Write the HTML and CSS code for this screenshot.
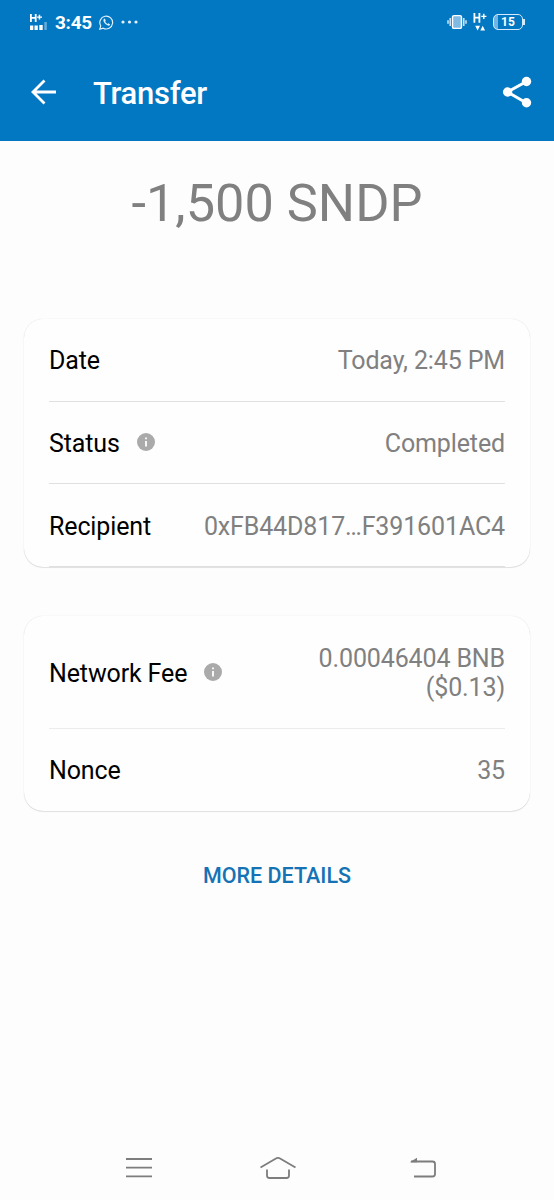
FILE: index.html
```html
<!DOCTYPE html>
<html lang="en">
<head>
<meta charset="utf-8">
<title>Transfer</title>
<link rel="stylesheet" href="styles.css">
</head>
<body>
<header class="top">
  <div class="status">
    <div class="status-left">
      <svg class="signal" width="19" height="18" viewBox="0 0 19 18" fill="#fff">
        <path d="M1 0h1.800v3h3V0h1.800v8H5.800V4.700h-3V8H1zM9.700.7h1.500v1.700h1.800v1.400h-1.800v1.700H9.700V3.800H8.100V2.400h1.600z"/>
        <path d="M1 11.500h3.300V16H1zM5.500 11.500h3.300V16H5.500zM10.300 11h3.400v5h-3.400z"/>
        <path d="M15.300 8h2.500v8h-2.500z" opacity=".4"/>
      </svg>
      <span class="clock">3:45</span>
      <svg class="chat" width="15" height="15" viewBox="0 0 15 15">
        <path d="M1.700 10.800A6.400 6.400 0 1 1 4.200 13.200L.8 14.200z" fill="none" stroke="#e3f1fb" stroke-width="1.200"/>
        <path d="M5 3.800q-1 1-.4 2.700 1.300 3 4.300 4.100 1.500.3 2.300-1.200l-1.700-1.200-1 .9Q6.900 8.200 6.100 6.600l.7-.8L6 3.800z" fill="#e3f1fb"/>
      </svg>
      <svg width="17" height="4" viewBox="0 0 17 4" fill="#e3f1fb"><circle cx="2" cy="2" r="1.600"/><circle cx="8.500" cy="2" r="1.600"/><circle cx="15" cy="2" r="1.600"/></svg>
    </div>
    <div class="status-right">
      <svg width="20" height="16" viewBox="0 0 20 16">
        <rect x="5.500" y="1.600" width="9" height="12.800" rx="1.500" fill="#7fbae5" stroke="#fff" stroke-width="1.400"/>
        <path d="M3.200 4v8M16.800 4v8M1 6.300v3.400M19 6.300v3.400" stroke="#d4e9f8" stroke-width="1.500"/>
      </svg>
      <svg class="net" width="14" height="19" viewBox="0 0 14 19" fill="#fff">
        <path d="M.5 0h1.800v3.800h3.200V0h1.800v9.800H5.500V5.500H2.300v4.300H.5zM10 .8h1.500v1.900h1.900v1.400h-1.900V6H10V4.100H8.200V2.700H10z"/>
        <path d="M2.200 12.800h4.800L4.600 17.600zM7.300 17.600h4.800l-2.400-4.800z"/>
      </svg>
      <div class="battery"><span class="level">15</span></div>
    </div>
  </div>
  <div class="bar">
    <svg class="back" width="26" height="26" viewBox="0 0 26 26" fill="none" stroke="#fff" stroke-width="2.800"><path d="M25 13H2.500M13.500 1.500L2 13l11.500 11.500"/></svg>
    <h1 class="title">Transfer</h1>
    <svg class="share" width="30" height="32" viewBox="0 0 30 32" fill="#fff"><path d="M24.500 5.500L5.500 16l19 11" fill="none" stroke="#fff" stroke-width="3"/><circle cx="24.500" cy="5.500" r="4.700"/><circle cx="5.600" cy="16" r="4.700"/><circle cx="24.500" cy="26.700" r="4.700"/></svg>
  </div>
</header>
<main class="content">
  <div class="amount">-1,500 SNDP</div>
  <section class="card">
    <div class="row line"><span class="label">Date</span><span class="value">Today, 2:45 PM</span></div>
    <div class="row line"><span class="label">Status</span><svg class="info" viewBox="0 0 18 18"><circle cx="9" cy="9" r="9" fill="#aaa"/><path d="M8.100 4.500h1.800v1.700H8.100zM8.100 8h1.800v5.500H8.100z" fill="#fff"/></svg><span class="value">Completed</span></div>
    <div class="row line"><span class="label">Recipient</span><span class="value">0xFB44D817…F391601AC4</span></div>
  </section>
  <section class="card fees">
    <div class="row tall line faint"><span class="label">Network Fee</span><svg class="info" viewBox="0 0 18 18"><circle cx="9" cy="9" r="9" fill="#aaa"/><path d="M8.100 4.500h1.800v1.700H8.100zM8.100 8h1.800v5.500H8.100z" fill="#fff"/></svg><span class="value">0.00046404 BNB<br>($0.13)</span></div>
    <div class="row last"><span class="label">Nonce</span><span class="value">35</span></div>
  </section>
  <button class="more">MORE DETAILS</button>
</main>
<nav class="nav">
  <svg width="28" height="22" viewBox="0 0 28 22" fill="none" stroke="#7d7d7d" stroke-width="1.800"><path d="M1 2h26M1 10.700h26M1 19.400h26"/></svg>
  <svg class="home" width="38" height="24" viewBox="0 0 38 24" fill="none" stroke="#7d7d7d" stroke-width="1.800"><path d="M1.500 11.500L16.500 2.700q2.500-1.500 5 0l15 8.800M8 13.500v6q0 2.500 2.500 2.500h17q2.500 0 2.500-2.500v-6"/></svg>
  <svg width="28" height="22" viewBox="0 0 28 22" fill="none" stroke="#7d7d7d" stroke-width="1.800"><path d="M2 4.500h21.500q2.500 0 2.500 2.500v10q0 2.500-2.500 2.500H5"/><path d="M.7 5.300L8 .8v4.500z" fill="#7d7d7d" stroke="none"/></svg>
</nav>
</body>
</html>
```
FILE: styles.css
```css
* { box-sizing: border-box; }
body {
  margin: 0;
  height: 1200px;
  display: flex;
  flex-direction: column;
  background: #fdfdfd;
  font-family: Roboto, sans-serif;
  color: #000;
}
svg { flex: none; display: block; }
.top { height: 141px; background: #0277c2; color: #fff; }
.status { height: 44px; display: flex; justify-content: space-between; padding: 0 31px 0 29px; }
.status-left, .status-right { display: flex; align-items: center; }
.signal { margin-top: 1px; }
.clock { font-size: 19px; letter-spacing: -.3px; font-weight: 700; margin: 1px 7px 0 7px; }
.chat { margin-right: 7px; }
.net { margin: 0 6px 0 6px; }
.battery {
  position: relative;
  width: 30px;
  height: 16px;
  border: 1.500px solid #d5eafa;
  border-radius: 5px;
  background: linear-gradient(90deg, #72b4e3 4px, transparent 4px);
  text-align: center;
}
.battery::after {
  content: "";
  position: absolute;
  right: -3px;
  top: 4px;
  width: 2px;
  height: 6px;
  background: #d5eafa;
}
.level { display: block; font-size: 12px; line-height: 14px; font-weight: 700; }
.bar { height: 97px; display: flex; align-items: center; padding: 0 22px 0 30px; }
.back { margin: -1px 0 0 1px; }
.title { margin: 2px 0 0 36px; font-size: 31px; letter-spacing: -.3px; font-weight: 500; line-height: 40px; }
.share { margin: -1px 0 0 auto; }
.content { flex: 1; padding: 0 24px; display: flex; flex-direction: column; }
.amount { margin-top: 31px; height: 62px; line-height: 62px; font-size: 52.300px; color: #808080; text-align: center; }
.card {
  height: 248px;
  margin-top: 85px;
  padding: 0 25px;
  border-radius: 19px;
  background: #fefefe;
  box-shadow: 0 0 1px rgba(0,0,0,.16), 0 1px 1px rgba(0,0,0,.1);
}
.row { height: 82.700px; display: flex; align-items: center; padding-top: 2px; font-size: 25px; letter-spacing: -.13px; line-height: 29px; }
.line { border-bottom: 1.500px solid #e0e0e0; }
.faint { border-color: #ececec; }
.value { margin-left: auto; color: #808080; text-align: right; }
.info { width: 18px; height: 18px; margin: -3px 0 0 17px; }
.fees { margin-top: 49px; height: 195px; }
.tall { height: 113px; }
.last { padding-top: 1px; }
.more {
  align-self: center;
  margin-top: 48px;
  padding: 0;
  border: 0;
  background: none;
  color: #1573b5;
  font: 500 21.500px/34px Roboto, sans-serif;
}
.nav { height: 66px; display: flex; justify-content: space-between; align-items: center; padding: 1px 117px 0 125px; }
.home { margin-right: 7px; }
```
